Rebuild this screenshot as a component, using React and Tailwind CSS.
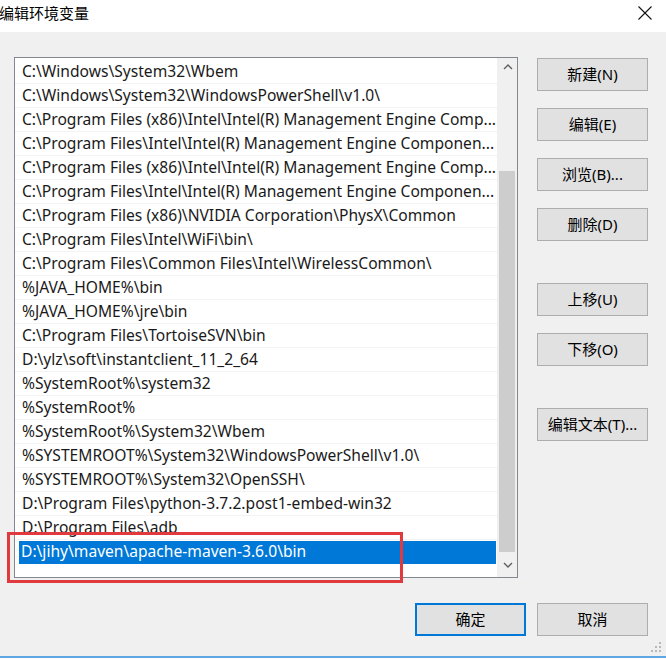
import React from "react";

const rows = [
  "C:\\Windows\\System32\\Wbem",
  "C:\\Windows\\System32\\WindowsPowerShell\\v1.0\\",
  "C:\\Program Files (x86)\\Intel\\Intel(R) Management Engine Comp...",
  "C:\\Program Files\\Intel\\Intel(R) Management Engine Componen...",
  "C:\\Program Files (x86)\\Intel\\Intel(R) Management Engine Comp...",
  "C:\\Program Files\\Intel\\Intel(R) Management Engine Componen...",
  "C:\\Program Files (x86)\\NVIDIA Corporation\\PhysX\\Common",
  "C:\\Program Files\\Intel\\WiFi\\bin\\",
  "C:\\Program Files\\Common Files\\Intel\\WirelessCommon\\",
  "%JAVA_HOME%\\bin",
  "%JAVA_HOME%\\jre\\bin",
  "C:\\Program Files\\TortoiseSVN\\bin",
  "D:\\ylz\\soft\\instantclient_11_2_64",
  "%SystemRoot%\\system32",
  "%SystemRoot%",
  "%SystemRoot%\\System32\\Wbem",
  "%SYSTEMROOT%\\System32\\WindowsPowerShell\\v1.0\\",
  "%SYSTEMROOT%\\System32\\OpenSSH\\",
  "D:\\Program Files\\python-3.7.2.post1-embed-win32",
  "D:\\Program Files\\adb",
];

function Btn({ children, className = "", primary = false }) {
  return (
    <div
      className={
        "w-[111px] h-[33px] flex items-center justify-center text-[15px] text-black bg-[#e1e1e1] " +
        (primary ? "border-2 border-[#0078d7] " : "border border-[#adadad] ") +
        className
      }
    >
      {children}
    </div>
  );
}

export default function App() {
  return (
    <div
      className="relative w-[666px] h-[659px] bg-[#f0f0f0] flex flex-col overflow-hidden font-['Noto_Sans','Noto_Sans_CJK_SC',sans-serif]"
    >
      {/* Title bar */}
      <div className="h-[32px] bg-white flex items-center justify-between shrink-0">
        <span className="text-[15px] text-black leading-none -ml-[1px] -mt-[6px]">编辑环境变量</span>
        <svg width="16" height="16" viewBox="0 0 16 16" className="mr-[13px] -mt-[6px]">
          <path d="M1.5 1.5 L14.5 14.5 M14.5 1.5 L1.5 14.5" stroke="#111" strokeWidth="1.1" fill="none" />
        </svg>
      </div>

      {/* Main */}
      <div className="flex pl-[14px] pt-[25px] gap-[19px]">
        {/* List box */}
        <div className="w-[504px] h-[521px] bg-white border border-[#828790] flex">
          <div className="flex-1 pt-[2px] overflow-hidden">
            {rows.map((r, i) => (
              <div
                key={i}
                className="h-[24px] flex items-center pl-[7px] border-b border-[#f3f3f3] text-[15.6px] text-[#1a1a1a] whitespace-nowrap overflow-hidden"
              >
                {r}
              </div>
            ))}
            <div className="h-[24px] flex items-center pl-[4px] pr-[1px]">
              <div className="h-[23px] w-full bg-[#0078d7] text-white text-[15.6px] flex items-center pl-[2px] whitespace-nowrap">
                D:\jihy\maven\apache-maven-3.6.0\bin
              </div>
            </div>
          </div>
          {/* Scrollbar */}
          <div className="w-[20px] bg-[#f0f0f0] flex flex-col border-l border-[#f0f0f0]">
            <div className="h-[17px] flex items-center justify-center">
              <svg width="10" height="6" viewBox="0 0 10 6">
                <path d="M1 5 L5 1 L9 5" stroke="#606060" strokeWidth="1.4" fill="none" />
              </svg>
            </div>
            <div className="h-[96px]" />
            <div className="h-[381px] bg-[#cdcdcd] mr-[2px] ml-[1px]" />
            <div className="flex-1 flex items-center justify-center">
              <svg width="10" height="6" viewBox="0 0 10 6">
                <path d="M1 1 L5 5 L9 1" stroke="#606060" strokeWidth="1.4" fill="none" />
              </svg>
            </div>
          </div>
        </div>

        {/* Right buttons */}
        <div className="flex flex-col pt-[1px]">
          <Btn>新建(N)</Btn>
          <Btn className="mt-[17px]">编辑(E)</Btn>
          <Btn className="mt-[17px]">浏览(B)...</Btn>
          <Btn className="mt-[17px]">删除(D)</Btn>
          <Btn className="mt-[42px]">上移(U)</Btn>
          <Btn className="mt-[17px]">下移(O)</Btn>
          <Btn className="mt-[42px]">编辑文本(T)...</Btn>
        </div>
      </div>

      {/* Bottom buttons */}
      <div className="flex justify-end gap-[11px] pr-[18px] mt-[25px]">
        <Btn primary>确定</Btn>
        <Btn>取消</Btn>
      </div>

      {/* Resize grip */}
      <div className="flex justify-end pr-[4px] mt-auto mb-[3px]">
        <svg width="11" height="11" viewBox="0 0 11 11">
          <rect x="8" y="0" width="2" height="2" fill="#b8b8b8" />
          <rect x="4" y="4" width="2" height="2" fill="#b8b8b8" />
          <rect x="8" y="4" width="2" height="2" fill="#b8b8b8" />
          <rect x="0" y="8" width="2" height="2" fill="#b8b8b8" />
          <rect x="4" y="8" width="2" height="2" fill="#b8b8b8" />
          <rect x="8" y="8" width="2" height="2" fill="#b8b8b8" />
        </svg>
      </div>
      <div className="h-[2px] bg-[#5ea5e2] shrink-0" />
      <div className="h-[1px] bg-white shrink-0" />

      {/* Red annotation rectangle */}
      <div className="absolute left-[7px] top-[532px] w-[396px] h-[51px] border-[3px] border-[#e0393e]" />
    </div>
  );
}
